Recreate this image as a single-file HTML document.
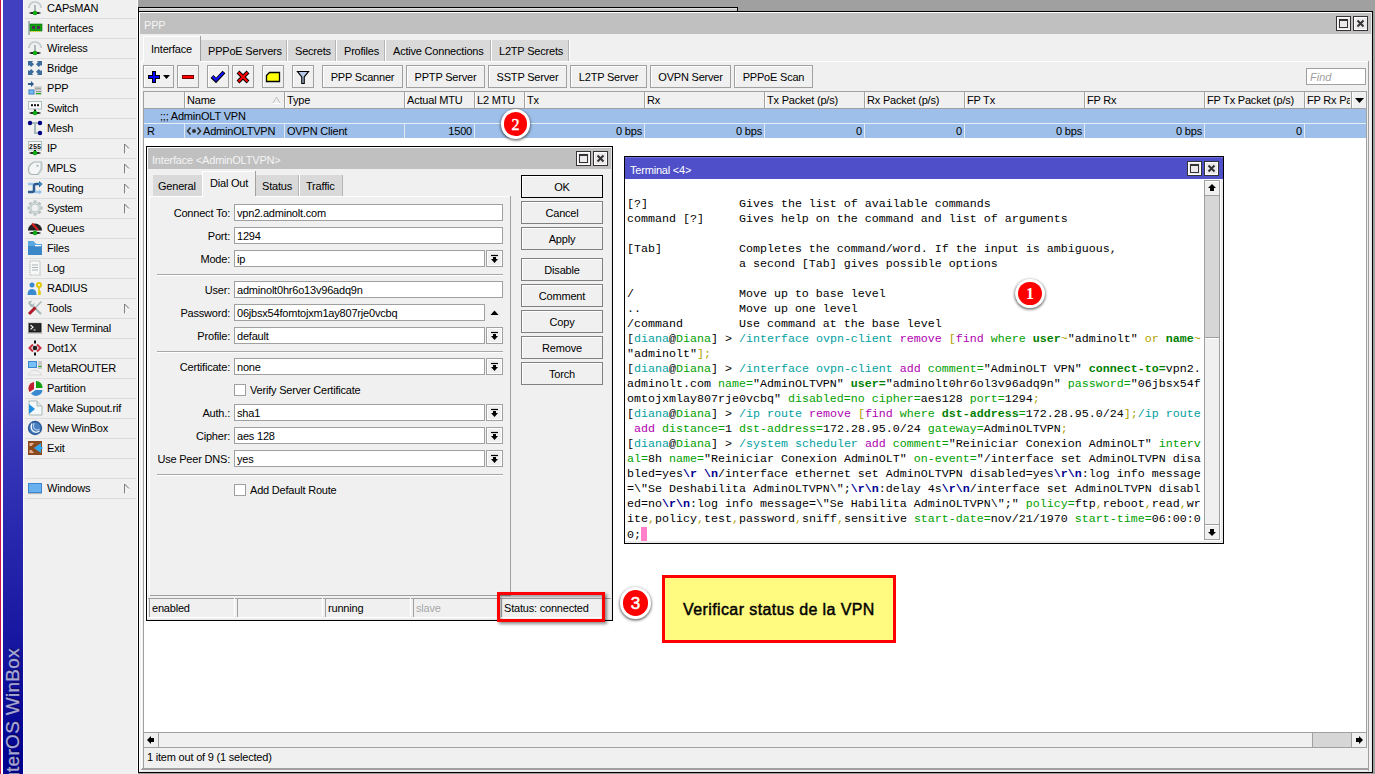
<!DOCTYPE html><html><head><meta charset="utf-8"><style>html,body{margin:0;padding:0;width:1375px;height:774px;overflow:hidden;background:#a0a0a0;position:relative;font-family:"Liberation Sans",sans-serif}</style></head><body><div style="position:absolute;left:0px;top:0px;width:1px;height:774px;background:#c8104c"></div><div style="position:absolute;left:1px;top:0px;width:2px;height:774px;background:#ffffff"></div><div style="position:absolute;left:3px;top:0px;width:20px;height:774px;background:linear-gradient(to bottom,#4040c0 0px,#4040c0 390px,#000090 774px)"></div><div style="position:absolute;left:-297px;top:648px;width:300px;height:20px;text-align:right;transform-origin:300px 0;transform:rotate(-90deg);font:19px/20px 'Liberation Sans', sans-serif;letter-spacing:0.3px;color:#a8a8d4;-webkit-text-stroke:0.3px #a8a8d4;white-space:pre;text-shadow:1px 1px 1px rgba(0,0,40,0.6)">RouterOS WinBox</div><div style="position:absolute;left:23px;top:0px;width:115px;height:774px;background:#f0f0f0"></div><div style="position:absolute;left:23px;top:0px;width:1px;height:774px;background:#fafafa"></div><div style="position:absolute;left:137px;top:0px;width:1px;height:774px;background:#ffffff"></div><div style="position:absolute;left:25px;top:18px;width:111px;height:1px;background:#dcdcdc"></div><div style="position:absolute;left:47px;top:2px;font:11px/13px 'Liberation Sans', sans-serif;color:#000;white-space:pre;letter-spacing:-0.2px">CAPsMAN</div><div style="position:absolute;left:25px;top:38px;width:111px;height:1px;background:#dcdcdc"></div><div style="position:absolute;left:47px;top:22px;font:11px/13px 'Liberation Sans', sans-serif;color:#000;white-space:pre;letter-spacing:-0.2px">Interfaces</div><div style="position:absolute;left:25px;top:58px;width:111px;height:1px;background:#dcdcdc"></div><div style="position:absolute;left:47px;top:42px;font:11px/13px 'Liberation Sans', sans-serif;color:#000;white-space:pre;letter-spacing:-0.2px">Wireless</div><div style="position:absolute;left:25px;top:78px;width:111px;height:1px;background:#dcdcdc"></div><div style="position:absolute;left:47px;top:62px;font:11px/13px 'Liberation Sans', sans-serif;color:#000;white-space:pre;letter-spacing:-0.2px">Bridge</div><div style="position:absolute;left:25px;top:98px;width:111px;height:1px;background:#dcdcdc"></div><div style="position:absolute;left:47px;top:82px;font:11px/13px 'Liberation Sans', sans-serif;color:#000;white-space:pre;letter-spacing:-0.2px">PPP</div><div style="position:absolute;left:25px;top:118px;width:111px;height:1px;background:#dcdcdc"></div><div style="position:absolute;left:47px;top:102px;font:11px/13px 'Liberation Sans', sans-serif;color:#000;white-space:pre;letter-spacing:-0.2px">Switch</div><div style="position:absolute;left:25px;top:138px;width:111px;height:1px;background:#dcdcdc"></div><div style="position:absolute;left:47px;top:122px;font:11px/13px 'Liberation Sans', sans-serif;color:#000;white-space:pre;letter-spacing:-0.2px">Mesh</div><div style="position:absolute;left:25px;top:158px;width:111px;height:1px;background:#dcdcdc"></div><div style="position:absolute;left:47px;top:142px;font:11px/13px 'Liberation Sans', sans-serif;color:#000;white-space:pre;letter-spacing:-0.2px">IP</div><svg style="position:absolute;left:123px;top:143px" width="8" height="12"><path d="M1.5 1 L1.5 10.5" stroke="#808080" stroke-width="1"/><path d="M1.5 1 L6 5.5" stroke="#707070" stroke-width="1"/><path d="M2 10.5 L6 6" stroke="#ffffff" stroke-width="1"/></svg><div style="position:absolute;left:25px;top:178px;width:111px;height:1px;background:#dcdcdc"></div><div style="position:absolute;left:47px;top:162px;font:11px/13px 'Liberation Sans', sans-serif;color:#000;white-space:pre;letter-spacing:-0.2px">MPLS</div><svg style="position:absolute;left:123px;top:163px" width="8" height="12"><path d="M1.5 1 L1.5 10.5" stroke="#808080" stroke-width="1"/><path d="M1.5 1 L6 5.5" stroke="#707070" stroke-width="1"/><path d="M2 10.5 L6 6" stroke="#ffffff" stroke-width="1"/></svg><div style="position:absolute;left:25px;top:198px;width:111px;height:1px;background:#dcdcdc"></div><div style="position:absolute;left:47px;top:182px;font:11px/13px 'Liberation Sans', sans-serif;color:#000;white-space:pre;letter-spacing:-0.2px">Routing</div><svg style="position:absolute;left:123px;top:183px" width="8" height="12"><path d="M1.5 1 L1.5 10.5" stroke="#808080" stroke-width="1"/><path d="M1.5 1 L6 5.5" stroke="#707070" stroke-width="1"/><path d="M2 10.5 L6 6" stroke="#ffffff" stroke-width="1"/></svg><div style="position:absolute;left:25px;top:218px;width:111px;height:1px;background:#dcdcdc"></div><div style="position:absolute;left:47px;top:202px;font:11px/13px 'Liberation Sans', sans-serif;color:#000;white-space:pre;letter-spacing:-0.2px">System</div><svg style="position:absolute;left:123px;top:203px" width="8" height="12"><path d="M1.5 1 L1.5 10.5" stroke="#808080" stroke-width="1"/><path d="M1.5 1 L6 5.5" stroke="#707070" stroke-width="1"/><path d="M2 10.5 L6 6" stroke="#ffffff" stroke-width="1"/></svg><div style="position:absolute;left:25px;top:238px;width:111px;height:1px;background:#dcdcdc"></div><div style="position:absolute;left:47px;top:222px;font:11px/13px 'Liberation Sans', sans-serif;color:#000;white-space:pre;letter-spacing:-0.2px">Queues</div><div style="position:absolute;left:25px;top:258px;width:111px;height:1px;background:#dcdcdc"></div><div style="position:absolute;left:47px;top:242px;font:11px/13px 'Liberation Sans', sans-serif;color:#000;white-space:pre;letter-spacing:-0.2px">Files</div><div style="position:absolute;left:25px;top:278px;width:111px;height:1px;background:#dcdcdc"></div><div style="position:absolute;left:47px;top:262px;font:11px/13px 'Liberation Sans', sans-serif;color:#000;white-space:pre;letter-spacing:-0.2px">Log</div><div style="position:absolute;left:25px;top:298px;width:111px;height:1px;background:#dcdcdc"></div><div style="position:absolute;left:47px;top:282px;font:11px/13px 'Liberation Sans', sans-serif;color:#000;white-space:pre;letter-spacing:-0.2px">RADIUS</div><div style="position:absolute;left:25px;top:318px;width:111px;height:1px;background:#dcdcdc"></div><div style="position:absolute;left:47px;top:302px;font:11px/13px 'Liberation Sans', sans-serif;color:#000;white-space:pre;letter-spacing:-0.2px">Tools</div><svg style="position:absolute;left:123px;top:303px" width="8" height="12"><path d="M1.5 1 L1.5 10.5" stroke="#808080" stroke-width="1"/><path d="M1.5 1 L6 5.5" stroke="#707070" stroke-width="1"/><path d="M2 10.5 L6 6" stroke="#ffffff" stroke-width="1"/></svg><div style="position:absolute;left:25px;top:338px;width:111px;height:1px;background:#dcdcdc"></div><div style="position:absolute;left:47px;top:322px;font:11px/13px 'Liberation Sans', sans-serif;color:#000;white-space:pre;letter-spacing:-0.2px">New Terminal</div><div style="position:absolute;left:25px;top:358px;width:111px;height:1px;background:#dcdcdc"></div><div style="position:absolute;left:47px;top:342px;font:11px/13px 'Liberation Sans', sans-serif;color:#000;white-space:pre;letter-spacing:-0.2px">Dot1X</div><div style="position:absolute;left:25px;top:378px;width:111px;height:1px;background:#dcdcdc"></div><div style="position:absolute;left:47px;top:362px;font:11px/13px 'Liberation Sans', sans-serif;color:#000;white-space:pre;letter-spacing:-0.2px">MetaROUTER</div><div style="position:absolute;left:25px;top:398px;width:111px;height:1px;background:#dcdcdc"></div><div style="position:absolute;left:47px;top:382px;font:11px/13px 'Liberation Sans', sans-serif;color:#000;white-space:pre;letter-spacing:-0.2px">Partition</div><div style="position:absolute;left:25px;top:418px;width:111px;height:1px;background:#dcdcdc"></div><div style="position:absolute;left:47px;top:402px;font:11px/13px 'Liberation Sans', sans-serif;color:#000;white-space:pre;letter-spacing:-0.2px">Make Supout.rif</div><div style="position:absolute;left:25px;top:438px;width:111px;height:1px;background:#dcdcdc"></div><div style="position:absolute;left:47px;top:422px;font:11px/13px 'Liberation Sans', sans-serif;color:#000;white-space:pre;letter-spacing:-0.2px">New WinBox</div><div style="position:absolute;left:25px;top:458px;width:111px;height:1px;background:#dcdcdc"></div><div style="position:absolute;left:47px;top:442px;font:11px/13px 'Liberation Sans', sans-serif;color:#000;white-space:pre;letter-spacing:-0.2px">Exit</div><div style="position:absolute;left:25px;top:478px;width:111px;height:1px;background:#dcdcdc"></div><div style="position:absolute;left:25px;top:498px;width:111px;height:1px;background:#dcdcdc"></div><div style="position:absolute;left:47px;top:482px;font:11px/13px 'Liberation Sans', sans-serif;color:#000;white-space:pre;letter-spacing:-0.2px">Windows</div><svg style="position:absolute;left:123px;top:483px" width="8" height="12"><path d="M1.5 1 L1.5 10.5" stroke="#808080" stroke-width="1"/><path d="M1.5 1 L6 5.5" stroke="#707070" stroke-width="1"/><path d="M2 10.5 L6 6" stroke="#ffffff" stroke-width="1"/></svg><svg width="0" height="0" style="position:absolute"><defs><radialGradient id="bg" cx="0.5" cy="0.5" r="0.5"><stop offset="0" stop-color="#000"/><stop offset="0.6" stop-color="#222"/><stop offset="1" stop-color="#000" stop-opacity="0"/></radialGradient><linearGradient id="ag" x1="0" y1="0" x2="0" y2="1"><stop offset="0" stop-color="#b8c4c4"/><stop offset="1" stop-color="#e8ecec"/></linearGradient></defs></svg><svg style="position:absolute;left:27px;top:0px" width="16" height="16" viewBox="0 0 16 16"><path d="M1.8 8 A6.2 6.2 0 0 1 14.2 8" fill="none" stroke="#c4cccc" stroke-width="1.8"/><rect x="7" y="5" width="2" height="7" fill="#aab8b8"/><ellipse cx="8" cy="13" rx="7" ry="1.4" fill="url(#bg)"/><circle cx="8" cy="13" r="2.3" fill="#10a810"/></svg><svg style="position:absolute;left:27px;top:20px" width="16" height="16" viewBox="0 0 16 16"><rect x="1" y="1" width="2" height="14" fill="#a8b8b8"/><rect x="3" y="4" width="12" height="7" fill="#10a010" stroke="#087008" stroke-width="0.6"/><rect x="5" y="6" width="3" height="3" fill="#4a3050"/><rect x="10" y="6" width="3" height="3" fill="#4a3050"/><path d="M4 11.5 H14" stroke="#e8e000" stroke-width="1" stroke-dasharray="1 1"/></svg><svg style="position:absolute;left:27px;top:40px" width="16" height="16" viewBox="0 0 16 16"><path d="M1.8 8 A6.2 6.2 0 0 1 14.2 8" fill="none" stroke="#c4cccc" stroke-width="1.8"/><rect x="7" y="5" width="2" height="7" fill="#aab8b8"/><ellipse cx="8" cy="13" rx="7" ry="1.4" fill="url(#bg)"/><circle cx="8" cy="13" r="2.3" fill="#10a810"/></svg><svg style="position:absolute;left:27px;top:60px" width="16" height="16" viewBox="0 0 16 16"><path d="M1 1 H6 L5 2.2 L7 4.2 L4.2 7 L2.2 5 L1 6 Z" fill="#3d6c9c"/><path d="M15 1 V6 L13.8 5 L11.8 7 L9 4.2 L11 2.2 L10 1 Z" fill="#3d6c9c" transform="translate(0,0)"/><path d="M1 15 V10 L2.2 11 L4.2 9 L7 11.8 L5 13.8 L6 15 Z" fill="#3d6c9c"/><path d="M15 15 H10 L11 13.8 L9 11.8 L11.8 9 L13.8 11 L15 10 Z" fill="#3d6c9c"/></svg><svg style="position:absolute;left:27px;top:80px" width="16" height="16" viewBox="0 0 16 16"><path d="M1 3 H4 V1 L7 4 L4 7 V5 H1 Z" fill="#2d5d8d"/><rect x="7" y="6" width="8" height="9" fill="#d8d8d8"/><rect x="8" y="7.5" width="6" height="2" fill="#a8a8a8"/><rect x="9" y="11" width="5" height="1" fill="#909090"/><rect x="9" y="13" width="5" height="1.2" fill="#10b010"/><rect x="1" y="9" width="7" height="6" fill="#e8e0d8"/><rect x="1.5" y="9.5" width="6" height="5" fill="#3a88d0"/><rect x="2.5" y="10.5" width="4" height="3" fill="#78b8f0"/></svg><svg style="position:absolute;left:27px;top:100px" width="16" height="16" viewBox="0 0 16 16"><rect x="1.5" y="1.5" width="13" height="7.5" fill="#fafafa" stroke="#b0c0c0" stroke-width="1"/><rect x="4" y="4.2" width="2" height="2" fill="#111"/><rect x="7" y="4.2" width="2" height="2" fill="#111"/><rect x="10" y="4.2" width="2" height="2" fill="#111"/><rect x="7" y="9.5" width="2" height="2" fill="#111"/><ellipse cx="8" cy="13" rx="7" ry="1.4" fill="url(#bg)"/><circle cx="8" cy="13" r="2.3" fill="#10a810"/></svg><svg style="position:absolute;left:27px;top:120px" width="16" height="16" viewBox="0 0 16 16"><path d="M3 3 H13 M8 3 V13 H13" fill="none" stroke="#a8b8b8" stroke-width="2"/><circle cx="3" cy="3" r="2.2" fill="#000080"/><circle cx="13" cy="3" r="2.2" fill="#000080"/><circle cx="13" cy="13" r="2.2" fill="#000080"/></svg><svg style="position:absolute;left:27px;top:140px" width="16" height="16" viewBox="0 0 16 16"><rect x="1.5" y="1.5" width="13" height="8.5" fill="#fafafa" stroke="#b0c0c0" stroke-width="1"/><text x="8" y="8.6" font-family="Liberation Mono" font-weight="bold" font-size="7" text-anchor="middle" fill="#111">255</text><rect x="7" y="10" width="2" height="2" fill="#111"/><ellipse cx="8" cy="13" rx="7" ry="1.4" fill="url(#bg)"/><circle cx="8" cy="13" r="2.3" fill="#10a810"/></svg><svg style="position:absolute;left:27px;top:160px" width="16" height="16" viewBox="0 0 16 16"><path d="M4 4 L7 2 H14.5 V9 L11 14.5 H6 Q1.5 14.5 1.5 10 Q1.5 6 4 4 Z" fill="#f4f6f6" stroke="#a8b4b4" stroke-width="1.2"/><path d="M14.5 3 V9 L11 14.5" fill="none" stroke="#c0cccc" stroke-width="2"/><rect x="9.5" y="4.8" width="2" height="2" fill="#b0bcbc"/></svg><svg style="position:absolute;left:27px;top:180px" width="16" height="16" viewBox="0 0 16 16"><path d="M1 4 H5 Q7 4 7 6 V10 Q7 12 9 12 H12" fill="none" stroke="#9cc4e8" stroke-width="2.4"/><path d="M12 9.5 L15 12 L12 14.5 Z" fill="#9cc4e8"/><path d="M1 12 H5 Q7 12 7 10 V6 Q7 4 9 4 H12" fill="none" stroke="#2d5d90" stroke-width="2.4"/><path d="M12 1 L15.5 4 L12 7.5 Z" fill="#2d5d90"/><circle cx="13" cy="4" r="0.9" fill="#30b0ff"/></svg><svg style="position:absolute;left:27px;top:200px" width="16" height="16" viewBox="0 0 16 16"><g fill="#b4c0c0"><circle cx="8" cy="8" r="6"/><rect x="6.5" y="0.5" width="3" height="15"/><rect x="0.5" y="6.5" width="15" height="3"/><rect x="6.5" y="0.5" width="3" height="15" transform="rotate(45 8 8)"/><rect x="6.5" y="0.5" width="3" height="15" transform="rotate(-45 8 8)"/></g><circle cx="8" cy="8" r="3.5" fill="#f0f0f0"/><circle cx="8" cy="8" r="5" fill="none" stroke="#f0f0f0" stroke-width="0.7"/></svg><svg style="position:absolute;left:27px;top:220px" width="16" height="16" viewBox="0 0 16 16"><path d="M1 10.5 A7 7 0 0 1 15 10.5 Z" fill="#222"/><path d="M5 3.5 L11 10" stroke="#d02020" stroke-width="2.4"/><ellipse cx="8" cy="13" rx="7" ry="1.4" fill="url(#bg)"/><circle cx="8" cy="13" r="2.3" fill="#10a810"/></svg><svg style="position:absolute;left:27px;top:240px" width="16" height="16" viewBox="0 0 16 16"><path d="M1 1 H6 L9 4 H15 V15 H1 Z" fill="#3a88c8"/><path d="M1 1 H6 L9 4 H15 V6 H1 Z" fill="#5aa8e0"/><rect x="8" y="5" width="6" height="1.3" fill="#ffffff"/></svg><svg style="position:absolute;left:27px;top:260px" width="16" height="16" viewBox="0 0 16 16"><path d="M3 1 H13 V15 H3 Z" fill="#f8f8f8" stroke="#b8c4c4" stroke-width="1.2" stroke-dasharray="1.5 0.6"/><path d="M5 5 H11 M5 7.5 H11 M5 10 H11" stroke="#a8b4b4" stroke-width="1"/></svg><svg style="position:absolute;left:27px;top:280px" width="16" height="16" viewBox="0 0 16 16"><circle cx="5" cy="5" r="2.5" fill="#3a8ad0"/><path d="M0.5 15 Q0.5 9 5 9 Q9.5 9 9.5 15 Z" fill="#3a8ad0"/><circle cx="12" cy="5" r="3" fill="#e0c800"/><circle cx="12" cy="5" r="1" fill="#fffbe0"/><path d="M12 8 V15 M12 12 H14 M12 14 H14" stroke="#e0c800" stroke-width="1.6"/></svg><svg style="position:absolute;left:27px;top:300px" width="16" height="16" viewBox="0 0 16 16"><path d="M4 4.5 L14 14" stroke="#a8b8b8" stroke-width="2.2"/><path d="M1.2 3.5 A3 3 0 0 1 5 0.8 L3.5 3.5 L5.5 5 L7.2 2.8 A3.2 3.2 0 0 1 4 7 Z" fill="#a8b8b8"/><path d="M14.5 1.5 L8 8" stroke="#a8b8b8" stroke-width="1.6"/><path d="M8.5 7.5 L2 14" stroke="#b01828" stroke-width="3"/></svg><svg style="position:absolute;left:27px;top:320px" width="16" height="16" viewBox="0 0 16 16"><rect x="1.5" y="3" width="13" height="9.5" fill="#1a1a1a" stroke="#888" stroke-width="0.5"/><rect x="3" y="4.5" width="10" height="6.5" fill="#2a2a2a"/><path d="M3.5 5 L6 7.2 L3.5 9.4" fill="none" stroke="#fff" stroke-width="1.1"/><path d="M6.5 10 H8.5" stroke="#fff" stroke-width="0.9"/><rect x="0.5" y="13" width="15" height="1" fill="#c8c8c8"/></svg><svg style="position:absolute;left:27px;top:340px" width="16" height="16" viewBox="0 0 16 16"><path d="M6 4.5 L2.5 8 L6 11.5 M10 4.5 L13.5 8 L10 11.5" fill="none" stroke="#c83040" stroke-width="2"/><rect x="7" y="0.5" width="2" height="3" fill="#111"/><rect x="7" y="12.5" width="2" height="3" fill="#111"/><circle cx="8" cy="8" r="2.3" fill="#222"/></svg><svg style="position:absolute;left:27px;top:360px" width="16" height="16" viewBox="0 0 16 16"><rect x="1" y="1" width="9" height="7" fill="#3a88d0"/><rect x="2" y="2" width="7" height="5" fill="#78c0f8"/><rect x="11" y="1" width="4" height="8" fill="#c8c8c8"/><rect x="11.5" y="6" width="3" height="1" fill="#10b010"/><path d="M1 15 Q4 10 8 10 Q12 10 15 15 Z" fill="none" stroke="#d8d8d8" stroke-width="1"/></svg><svg style="position:absolute;left:27px;top:380px" width="16" height="16" viewBox="0 0 16 16"><path d="M7 2 A6.5 6.5 0 0 0 2.5 12 L7 9 Z" fill="#c02030"/><path d="M9 1 V8 H15.5 A6.5 6.5 0 0 0 9 1 Z" fill="#10a010"/><path d="M15.5 10 A6.5 6.5 0 0 1 4 13.5 L8.5 10 Z" fill="#3a88d0"/></svg><svg style="position:absolute;left:27px;top:400px" width="16" height="16" viewBox="0 0 16 16"><path d="M2 1 H10 L15 6 V15 H2 Z" fill="#f4f8f8" stroke="#a8b8b8" stroke-width="1"/><path d="M10 1 V6 H15" fill="#e0e8e8" stroke="#a8b8b8" stroke-width="1"/><path d="M2 4 L8 9 L2 14 Z" fill="#2090e0"/></svg><svg style="position:absolute;left:27px;top:420px" width="16" height="16" viewBox="0 0 16 16"><circle cx="8" cy="8" r="7.2" fill="#2d5d9a"/><circle cx="8" cy="8" r="5.5" fill="#4a80c0"/><path d="M5 3.5 Q3 8 6 11 Q9 13.5 12.5 11" fill="none" stroke="#fff" stroke-width="1.2"/><path d="M7 3 Q5.5 7 7.5 9 Q10 11 12.5 9.5" fill="none" stroke="#e0f0ff" stroke-width="0.8"/></svg><svg style="position:absolute;left:27px;top:440px" width="16" height="16" viewBox="0 0 16 16"><rect x="1" y="1" width="14" height="14" fill="#8a4a20"/><path d="M2.5 3 H7 L4.5 6 H2.5 Z M2.5 10 H4.5 L7 13 H2.5 Z" fill="#e8b090"/><path d="M14 3 V13 L7 8 Z" fill="#30a8f0"/><rect x="12" y="7" width="3.5" height="2" fill="#30a8f0"/></svg><svg style="position:absolute;left:27px;top:480px" width="16" height="16" viewBox="0 0 16 16"><rect x="1" y="3" width="14" height="10" fill="#3a88d0"/><rect x="2" y="4" width="12" height="8" fill="#68b0f0"/><rect x="1" y="13" width="14" height="1.2" fill="#b8b8b8"/></svg><div style="position:absolute;left:138px;top:7px;width:600px;height:5px;background:#000"></div><div style="position:absolute;left:139px;top:8px;width:598px;height:1px;background:#e0e0e0"></div><div style="position:absolute;left:139px;top:9px;width:598px;height:2px;background:#c8c8c8"></div><div style="position:absolute;left:138px;top:11px;width:1235px;height:762px;background:#000"></div><div style="position:absolute;left:139px;top:12px;width:1233px;height:760px;background:#ffffff"></div><div style="position:absolute;left:140px;top:13px;width:1232px;height:759px;background:#f0f0f0"></div><div style="position:absolute;left:1371px;top:12px;width:1px;height:760px;background:#e8e8e8"></div><div style="position:absolute;left:139px;top:771px;width:1233px;height:1px;background:#e8e8e8"></div><div style="position:absolute;left:140px;top:13px;width:1231px;height:21px;background:#c0c0c0"></div><div style="position:absolute;left:144px;top:19px;font:11px/13px 'Liberation Sans', sans-serif;color:#f4f4f4;white-space:pre;letter-spacing:-0.2px">PPP</div><div style="position:absolute;left:1336px;top:16px;width:15px;height:15px;background:#333"></div><div style="position:absolute;left:1337px;top:17px;width:13px;height:13px;background:#ffffff"></div><div style="position:absolute;left:1338px;top:18px;width:12px;height:12px;background:#ece8ec"></div><div style="position:absolute;left:1338px;top:29px;width:12px;height:1px;background:#ffffff"></div><div style="position:absolute;left:1339px;top:19px;width:9px;height:9px;background:#333"></div><div style="position:absolute;left:1340px;top:21px;width:7px;height:6px;background:#ece8ec"></div><div style="position:absolute;left:1353px;top:16px;width:15px;height:15px;background:#333"></div><div style="position:absolute;left:1354px;top:17px;width:13px;height:13px;background:#ffffff"></div><div style="position:absolute;left:1355px;top:18px;width:12px;height:12px;background:#ece8ec"></div><div style="position:absolute;left:1355px;top:29px;width:12px;height:1px;background:#ffffff"></div><svg style="position:absolute;left:1353px;top:16px" width="15" height="15"><path d="M4.5 4.5 L10.5 10.5 M10.5 4.5 L4.5 10.5" stroke="#333" stroke-width="2"/></svg><div style="position:absolute;left:201px;top:40px;width:368px;height:21px;background:#d9d9d9"></div><div style="position:absolute;left:143px;top:36px;width:57px;height:1px;background:#ffffff"></div><div style="position:absolute;left:143px;top:36px;width:1px;height:26px;background:#ffffff"></div><div style="position:absolute;left:200px;top:36px;width:1px;height:25px;background:#a0a0a0"></div><div style="position:absolute;left:151px;top:43px;font:11px/13px 'Liberation Sans', sans-serif;color:#000;white-space:pre;letter-spacing:-0.2px">Interface</div><div style="position:absolute;left:208px;top:45px;font:11px/13px 'Liberation Sans', sans-serif;color:#000;white-space:pre;letter-spacing:-0.2px">PPPoE Servers</div><div style="position:absolute;left:286px;top:40px;width:1px;height:21px;background:#b4b4b4"></div><div style="position:absolute;left:287px;top:40px;width:1px;height:21px;background:#ffffff"></div><div style="position:absolute;left:295px;top:45px;font:11px/13px 'Liberation Sans', sans-serif;color:#000;white-space:pre;letter-spacing:-0.2px">Secrets</div><div style="position:absolute;left:335px;top:40px;width:1px;height:21px;background:#b4b4b4"></div><div style="position:absolute;left:336px;top:40px;width:1px;height:21px;background:#ffffff"></div><div style="position:absolute;left:344px;top:45px;font:11px/13px 'Liberation Sans', sans-serif;color:#000;white-space:pre;letter-spacing:-0.2px">Profiles</div><div style="position:absolute;left:384px;top:40px;width:1px;height:21px;background:#b4b4b4"></div><div style="position:absolute;left:385px;top:40px;width:1px;height:21px;background:#ffffff"></div><div style="position:absolute;left:393px;top:45px;font:11px/13px 'Liberation Sans', sans-serif;color:#000;white-space:pre;letter-spacing:-0.2px">Active Connections</div><div style="position:absolute;left:490px;top:40px;width:1px;height:21px;background:#b4b4b4"></div><div style="position:absolute;left:491px;top:40px;width:1px;height:21px;background:#ffffff"></div><div style="position:absolute;left:499px;top:45px;font:11px/13px 'Liberation Sans', sans-serif;color:#000;white-space:pre;letter-spacing:-0.2px">L2TP Secrets</div><div style="position:absolute;left:568px;top:40px;width:1px;height:21px;background:#b4b4b4"></div><div style="position:absolute;left:569px;top:40px;width:1px;height:21px;background:#ffffff"></div><div style="position:absolute;left:200px;top:61px;width:1169px;height:1px;background:#ffffff"></div><div style="position:absolute;left:141px;top:61px;width:3px;height:1px;background:#ffffff"></div><div style="position:absolute;left:141px;top:61px;width:1px;height:710px;background:#ffffff"></div><div style="position:absolute;left:1368px;top:61px;width:1px;height:710px;background:#a0a0a0"></div><div style="position:absolute;left:141px;top:769px;width:1228px;height:1px;background:#a0a0a0"></div><div style="position:absolute;left:143px;top:65px;width:31px;height:23px;background:#a0a0a0"></div><div style="position:absolute;left:144px;top:66px;width:29px;height:21px;background:#ffffff"></div><div style="position:absolute;left:145px;top:67px;width:28px;height:20px;background:#f0f0f0"></div><div style="position:absolute;left:177px;top:65px;width:22px;height:23px;background:#a0a0a0"></div><div style="position:absolute;left:178px;top:66px;width:20px;height:21px;background:#ffffff"></div><div style="position:absolute;left:179px;top:67px;width:19px;height:20px;background:#f0f0f0"></div><div style="position:absolute;left:207px;top:65px;width:22px;height:23px;background:#a0a0a0"></div><div style="position:absolute;left:208px;top:66px;width:20px;height:21px;background:#ffffff"></div><div style="position:absolute;left:209px;top:67px;width:19px;height:20px;background:#f0f0f0"></div><div style="position:absolute;left:232px;top:65px;width:22px;height:23px;background:#a0a0a0"></div><div style="position:absolute;left:233px;top:66px;width:20px;height:21px;background:#ffffff"></div><div style="position:absolute;left:234px;top:67px;width:19px;height:20px;background:#f0f0f0"></div><div style="position:absolute;left:262px;top:65px;width:22px;height:23px;background:#a0a0a0"></div><div style="position:absolute;left:263px;top:66px;width:20px;height:21px;background:#ffffff"></div><div style="position:absolute;left:264px;top:67px;width:19px;height:20px;background:#f0f0f0"></div><div style="position:absolute;left:292px;top:65px;width:22px;height:23px;background:#a0a0a0"></div><div style="position:absolute;left:293px;top:66px;width:20px;height:21px;background:#ffffff"></div><div style="position:absolute;left:294px;top:67px;width:19px;height:20px;background:#f0f0f0"></div><div style="position:absolute;left:322px;top:65px;width:81px;height:23px;background:#a0a0a0"></div><div style="position:absolute;left:323px;top:66px;width:79px;height:21px;background:#ffffff"></div><div style="position:absolute;left:324px;top:67px;width:78px;height:20px;background:#f0f0f0"></div><div style="position:absolute;left:312.5px;width:100px;top:71px;font:11px/13px 'Liberation Sans', sans-serif;color:#000;white-space:pre;text-align:center;letter-spacing:-0.2px">PPP Scanner</div><div style="position:absolute;left:406px;top:65px;width:79px;height:23px;background:#a0a0a0"></div><div style="position:absolute;left:407px;top:66px;width:77px;height:21px;background:#ffffff"></div><div style="position:absolute;left:408px;top:67px;width:76px;height:20px;background:#f0f0f0"></div><div style="position:absolute;left:396.5px;width:98px;top:71px;font:11px/13px 'Liberation Sans', sans-serif;color:#000;white-space:pre;text-align:center;letter-spacing:-0.2px">PPTP Server</div><div style="position:absolute;left:488px;top:65px;width:79px;height:23px;background:#a0a0a0"></div><div style="position:absolute;left:489px;top:66px;width:77px;height:21px;background:#ffffff"></div><div style="position:absolute;left:490px;top:67px;width:76px;height:20px;background:#f0f0f0"></div><div style="position:absolute;left:478.5px;width:98px;top:71px;font:11px/13px 'Liberation Sans', sans-serif;color:#000;white-space:pre;text-align:center;letter-spacing:-0.2px">SSTP Server</div><div style="position:absolute;left:570px;top:65px;width:77px;height:23px;background:#a0a0a0"></div><div style="position:absolute;left:571px;top:66px;width:75px;height:21px;background:#ffffff"></div><div style="position:absolute;left:572px;top:67px;width:74px;height:20px;background:#f0f0f0"></div><div style="position:absolute;left:560.5px;width:96px;top:71px;font:11px/13px 'Liberation Sans', sans-serif;color:#000;white-space:pre;text-align:center;letter-spacing:-0.2px">L2TP Server</div><div style="position:absolute;left:650px;top:65px;width:81px;height:23px;background:#a0a0a0"></div><div style="position:absolute;left:651px;top:66px;width:79px;height:21px;background:#ffffff"></div><div style="position:absolute;left:652px;top:67px;width:78px;height:20px;background:#f0f0f0"></div><div style="position:absolute;left:640.5px;width:100px;top:71px;font:11px/13px 'Liberation Sans', sans-serif;color:#000;white-space:pre;text-align:center;letter-spacing:-0.2px">OVPN Server</div><div style="position:absolute;left:734px;top:65px;width:79px;height:23px;background:#a0a0a0"></div><div style="position:absolute;left:735px;top:66px;width:77px;height:21px;background:#ffffff"></div><div style="position:absolute;left:736px;top:67px;width:76px;height:20px;background:#f0f0f0"></div><div style="position:absolute;left:724.5px;width:98px;top:71px;font:11px/13px 'Liberation Sans', sans-serif;color:#000;white-space:pre;text-align:center;letter-spacing:-0.2px">PPPoE Scan</div><svg style="position:absolute;left:143px;top:65px" width="31" height="23"><path d="M9 6H13V10H17V14H13V18H9V14H5V10H9Z" fill="#000"/><path d="M10 7H12V11H16V13H12V17H10V13H6V11H10Z" fill="#0000ff"/><path d="M20 10H27L23.5 14Z" fill="#000"/></svg><svg style="position:absolute;left:177px;top:65px" width="22" height="23"><rect x="5" y="10" width="12" height="4" fill="#7a0000"/><rect x="6" y="11" width="10" height="2" fill="#ff0000"/></svg><svg style="position:absolute;left:207px;top:65px" width="22" height="23"><path d="M5 11.5 L9 15.5 L17 7" fill="none" stroke="#000" stroke-width="4"/><path d="M5.5 11.5 L9 15 L16.5 7.5" fill="none" stroke="#1010ff" stroke-width="2"/></svg><svg style="position:absolute;left:232px;top:65px" width="22" height="23"><path d="M6 7 L16 17 M16 7 L6 17" stroke="#000" stroke-width="4"/><path d="M6.5 7.5 L15.5 16.5 M15.5 7.5 L6.5 16.5" stroke="#ff0000" stroke-width="2.2"/></svg><svg style="position:absolute;left:262px;top:65px" width="22" height="23"><path d="M4.5 10.5 L7.5 7.5 H17.5 V16.5 H4.5 Z" fill="#ffff00" stroke="#000" stroke-width="1.3"/></svg><svg style="position:absolute;left:292px;top:65px" width="22" height="23"><path d="M5.5 6.5 H16.5 L12.2 12 V18.5 H9.8 V12 Z" fill="#b8c8e8" stroke="#000" stroke-width="1.2"/></svg><div style="position:absolute;left:1306px;top:68px;width:60px;height:17px;background:#a0a0a0"></div><div style="position:absolute;left:1307px;top:69px;width:58px;height:15px;background:#ffffff"></div><div style="position:absolute;left:1310px;top:71px;font:11px/13px 'Liberation Sans', sans-serif;color:#a0a0a0;white-space:pre;font-style:italic">Find</div><div style="position:absolute;left:143px;top:91px;width:1224px;height:1px;background:#a0a0a0"></div><div style="position:absolute;left:143px;top:91px;width:1px;height:678px;background:#a0a0a0"></div><div style="position:absolute;left:1366px;top:91px;width:1px;height:657px;background:#a0a0a0"></div><div style="position:absolute;left:144px;top:92px;width:1222px;height:16px;background:#f0f0f0"></div><div style="position:absolute;left:143px;top:108px;width:1224px;height:1px;background:#a0a0a0"></div><div style="position:absolute;left:184px;top:92px;width:1px;height:16px;background:#a0a0a0"></div><div style="position:absolute;left:185px;top:92px;width:1px;height:16px;background:#ffffff"></div><div style="position:absolute;left:187px;top:94px;width:96px;overflow:hidden;font:11px/13px 'Liberation Sans', sans-serif;white-space:pre;letter-spacing:-0.2px">Name</div><div style="position:absolute;left:284px;top:92px;width:1px;height:16px;background:#a0a0a0"></div><div style="position:absolute;left:285px;top:92px;width:1px;height:16px;background:#ffffff"></div><div style="position:absolute;left:287px;top:94px;width:116px;overflow:hidden;font:11px/13px 'Liberation Sans', sans-serif;white-space:pre;letter-spacing:-0.2px">Type</div><div style="position:absolute;left:404px;top:92px;width:1px;height:16px;background:#a0a0a0"></div><div style="position:absolute;left:405px;top:92px;width:1px;height:16px;background:#ffffff"></div><div style="position:absolute;left:407px;top:94px;width:66px;overflow:hidden;font:11px/13px 'Liberation Sans', sans-serif;white-space:pre;letter-spacing:-0.2px">Actual MTU</div><div style="position:absolute;left:474px;top:92px;width:1px;height:16px;background:#a0a0a0"></div><div style="position:absolute;left:475px;top:92px;width:1px;height:16px;background:#ffffff"></div><div style="position:absolute;left:477px;top:94px;width:46px;overflow:hidden;font:11px/13px 'Liberation Sans', sans-serif;white-space:pre;letter-spacing:-0.2px">L2 MTU</div><div style="position:absolute;left:524px;top:92px;width:1px;height:16px;background:#a0a0a0"></div><div style="position:absolute;left:525px;top:92px;width:1px;height:16px;background:#ffffff"></div><div style="position:absolute;left:527px;top:94px;width:116px;overflow:hidden;font:11px/13px 'Liberation Sans', sans-serif;white-space:pre;letter-spacing:-0.2px">Tx</div><div style="position:absolute;left:644px;top:92px;width:1px;height:16px;background:#a0a0a0"></div><div style="position:absolute;left:645px;top:92px;width:1px;height:16px;background:#ffffff"></div><div style="position:absolute;left:647px;top:94px;width:116px;overflow:hidden;font:11px/13px 'Liberation Sans', sans-serif;white-space:pre;letter-spacing:-0.2px">Rx</div><div style="position:absolute;left:764px;top:92px;width:1px;height:16px;background:#a0a0a0"></div><div style="position:absolute;left:765px;top:92px;width:1px;height:16px;background:#ffffff"></div><div style="position:absolute;left:767px;top:94px;width:96px;overflow:hidden;font:11px/13px 'Liberation Sans', sans-serif;white-space:pre;letter-spacing:-0.2px">Tx Packet (p/s)</div><div style="position:absolute;left:864px;top:92px;width:1px;height:16px;background:#a0a0a0"></div><div style="position:absolute;left:865px;top:92px;width:1px;height:16px;background:#ffffff"></div><div style="position:absolute;left:867px;top:94px;width:96px;overflow:hidden;font:11px/13px 'Liberation Sans', sans-serif;white-space:pre;letter-spacing:-0.2px">Rx Packet (p/s)</div><div style="position:absolute;left:964px;top:92px;width:1px;height:16px;background:#a0a0a0"></div><div style="position:absolute;left:965px;top:92px;width:1px;height:16px;background:#ffffff"></div><div style="position:absolute;left:967px;top:94px;width:116px;overflow:hidden;font:11px/13px 'Liberation Sans', sans-serif;white-space:pre;letter-spacing:-0.2px">FP Tx</div><div style="position:absolute;left:1084px;top:92px;width:1px;height:16px;background:#a0a0a0"></div><div style="position:absolute;left:1085px;top:92px;width:1px;height:16px;background:#ffffff"></div><div style="position:absolute;left:1087px;top:94px;width:116px;overflow:hidden;font:11px/13px 'Liberation Sans', sans-serif;white-space:pre;letter-spacing:-0.2px">FP Rx</div><div style="position:absolute;left:1204px;top:92px;width:1px;height:16px;background:#a0a0a0"></div><div style="position:absolute;left:1205px;top:92px;width:1px;height:16px;background:#ffffff"></div><div style="position:absolute;left:1207px;top:94px;width:96px;overflow:hidden;font:11px/13px 'Liberation Sans', sans-serif;white-space:pre;letter-spacing:-0.2px">FP Tx Packet (p/s)</div><div style="position:absolute;left:1304px;top:92px;width:1px;height:16px;background:#a0a0a0"></div><div style="position:absolute;left:1305px;top:92px;width:1px;height:16px;background:#ffffff"></div><div style="position:absolute;left:1307px;top:94px;width:43px;overflow:hidden;font:11px/13px 'Liberation Sans', sans-serif;white-space:pre;letter-spacing:-0.2px">FP Rx Pa</div><div style="position:absolute;left:1351px;top:92px;width:1px;height:16px;background:#a0a0a0"></div><div style="position:absolute;left:1352px;top:92px;width:1px;height:16px;background:#ffffff"></div><svg style="position:absolute;left:272px;top:95px" width="10" height="10"><path d="M1 8 L4.5 2 L8 8" fill="none" stroke="#c0c0c0" stroke-width="1"/><path d="M1 8.5 H8" stroke="#ffffff"/></svg><svg style="position:absolute;left:1353px;top:96px" width="13" height="10"><path d="M2 2 H11 L6.5 7 Z" fill="#000"/></svg><div style="position:absolute;left:144px;top:109px;width:1222px;height:623px;background:#ffffff"></div><div style="position:absolute;left:144px;top:109px;width:1222px;height:14px;background:#9dbfe9"></div><div style="position:absolute;left:144px;top:123px;width:1222px;height:1px;background:#e6eef8"></div><div style="position:absolute;left:144px;top:124px;width:1222px;height:14px;background:#9dbfe9"></div><div style="position:absolute;left:160px;top:110px;font:11px/13px 'Liberation Sans', sans-serif;color:#000;white-space:pre;letter-spacing:-0.2px">;;; AdminOLT VPN</div><div style="position:absolute;left:184px;top:124px;width:1px;height:14px;background:#e0e8f2"></div><div style="position:absolute;left:284px;top:124px;width:1px;height:14px;background:#e0e8f2"></div><div style="position:absolute;left:404px;top:124px;width:1px;height:14px;background:#e0e8f2"></div><div style="position:absolute;left:474px;top:124px;width:1px;height:14px;background:#e0e8f2"></div><div style="position:absolute;left:524px;top:124px;width:1px;height:14px;background:#e0e8f2"></div><div style="position:absolute;left:644px;top:124px;width:1px;height:14px;background:#e0e8f2"></div><div style="position:absolute;left:764px;top:124px;width:1px;height:14px;background:#e0e8f2"></div><div style="position:absolute;left:864px;top:124px;width:1px;height:14px;background:#e0e8f2"></div><div style="position:absolute;left:964px;top:124px;width:1px;height:14px;background:#e0e8f2"></div><div style="position:absolute;left:1084px;top:124px;width:1px;height:14px;background:#e0e8f2"></div><div style="position:absolute;left:1204px;top:124px;width:1px;height:14px;background:#e0e8f2"></div><div style="position:absolute;left:1304px;top:124px;width:1px;height:14px;background:#e0e8f2"></div><div style="position:absolute;left:147px;top:125px;font:11px/13px 'Liberation Sans', sans-serif;color:#000;white-space:pre;letter-spacing:-0.2px">R</div><svg style="position:absolute;left:186px;top:126px" width="16" height="10"><path d="M4.5 1.5 L1.5 5 L4.5 8.5 M11.5 1.5 L14.5 5 L11.5 8.5" fill="none" stroke="#303030" stroke-width="1.6"/><circle cx="8" cy="5" r="2" fill="#303030"/></svg><div style="position:absolute;left:203px;top:125px;font:11px/13px 'Liberation Sans', sans-serif;color:#000;white-space:pre;letter-spacing:-0.2px">AdminOLTVPN</div><div style="position:absolute;left:287px;top:125px;font:11px/13px 'Liberation Sans', sans-serif;color:#000;white-space:pre;letter-spacing:-0.2px">OVPN Client</div><div style="position:absolute;right:903px;top:125px;font:11px/13px 'Liberation Sans', sans-serif;color:#000;white-space:pre;text-align:right;letter-spacing:-0.2px">1500</div><div style="position:absolute;right:733px;top:125px;font:11px/13px 'Liberation Sans', sans-serif;color:#000;white-space:pre;text-align:right;letter-spacing:-0.2px">0 bps</div><div style="position:absolute;right:613px;top:125px;font:11px/13px 'Liberation Sans', sans-serif;color:#000;white-space:pre;text-align:right;letter-spacing:-0.2px">0 bps</div><div style="position:absolute;right:513px;top:125px;font:11px/13px 'Liberation Sans', sans-serif;color:#000;white-space:pre;text-align:right;letter-spacing:-0.2px">0</div><div style="position:absolute;right:413px;top:125px;font:11px/13px 'Liberation Sans', sans-serif;color:#000;white-space:pre;text-align:right;letter-spacing:-0.2px">0</div><div style="position:absolute;right:293px;top:125px;font:11px/13px 'Liberation Sans', sans-serif;color:#000;white-space:pre;text-align:right;letter-spacing:-0.2px">0 bps</div><div style="position:absolute;right:173px;top:125px;font:11px/13px 'Liberation Sans', sans-serif;color:#000;white-space:pre;text-align:right;letter-spacing:-0.2px">0 bps</div><div style="position:absolute;right:73px;top:125px;font:11px/13px 'Liberation Sans', sans-serif;color:#000;white-space:pre;text-align:right;letter-spacing:-0.2px">0</div><div style="position:absolute;left:143px;top:732px;width:1224px;height:1px;background:#a0a0a0"></div><div style="position:absolute;left:143px;top:747px;width:1224px;height:1px;background:#a0a0a0"></div><div style="position:absolute;left:144px;top:733px;width:1222px;height:14px;background:#f0f0f0"></div><div style="position:absolute;left:158px;top:733px;width:1px;height:14px;background:#a0a0a0"></div><div style="position:absolute;left:1312px;top:733px;width:39px;height:14px;background:#d6d6d6"></div><div style="position:absolute;left:1312px;top:733px;width:1px;height:14px;background:#a0a0a0"></div><div style="position:absolute;left:1351px;top:733px;width:1px;height:14px;background:#a0a0a0"></div><svg style="position:absolute;left:144px;top:733px" width="14" height="14"><path d="M3 7 L7 3 V5 H10 V9 H7 V11 Z" fill="#000"/></svg><svg style="position:absolute;left:1352px;top:733px" width="14" height="14"><path d="M11 7 L7 3 V5 H4 V9 H7 V11 Z" fill="#000"/></svg><div style="position:absolute;left:147px;top:751px;font:11px/13px 'Liberation Sans', sans-serif;color:#000;white-space:pre;letter-spacing:-0.2px">1 item out of 9 (1 selected)</div><div style="position:absolute;left:142px;top:768px;width:1227px;height:1px;background:#a0a0a0"></div><div style="position:absolute;left:146px;top:146px;width:467px;height:475px;background:#000"></div><div style="position:absolute;left:147px;top:147px;width:465px;height:473px;background:#ffffff"></div><div style="position:absolute;left:148px;top:148px;width:464px;height:472px;background:#f0f0f0"></div><div style="position:absolute;left:611px;top:147px;width:1px;height:473px;background:#e4e4e4"></div><div style="position:absolute;left:147px;top:619px;width:465px;height:1px;background:#e4e4e4"></div><div style="position:absolute;left:148px;top:148px;width:463px;height:21px;background:#c0c0c0"></div><div style="position:absolute;left:152px;top:154px;font:11px/13px 'Liberation Sans', sans-serif;color:#f4f4f4;white-space:pre;letter-spacing:-0.2px">Interface &lt;AdminOLTVPN&gt;</div><div style="position:absolute;left:576px;top:151px;width:15px;height:15px;background:#333"></div><div style="position:absolute;left:577px;top:152px;width:13px;height:13px;background:#ffffff"></div><div style="position:absolute;left:578px;top:153px;width:11px;height:11px;background:#ece8ec"></div><div style="position:absolute;left:579px;top:154px;width:9px;height:9px;background:#333"></div><div style="position:absolute;left:580px;top:156px;width:7px;height:6px;background:#ece8ec"></div><div style="position:absolute;left:593px;top:151px;width:15px;height:15px;background:#333"></div><div style="position:absolute;left:594px;top:152px;width:13px;height:13px;background:#ffffff"></div><div style="position:absolute;left:595px;top:153px;width:11px;height:11px;background:#ece8ec"></div><svg style="position:absolute;left:593px;top:151px" width="15" height="15"><path d="M4.5 4.5 L10.5 10.5 M10.5 4.5 L4.5 10.5" stroke="#333" stroke-width="2"/></svg><div style="position:absolute;left:153px;top:175px;width:49px;height:21px;background:#d9d9d9"></div><div style="position:absolute;left:158px;top:180px;font:11px/13px 'Liberation Sans', sans-serif;color:#000;white-space:pre;letter-spacing:-0.2px">General</div><div style="position:absolute;left:202px;top:171px;width:53px;height:1px;background:#ffffff"></div><div style="position:absolute;left:202px;top:171px;width:1px;height:26px;background:#ffffff"></div><div style="position:absolute;left:255px;top:171px;width:1px;height:25px;background:#a0a0a0"></div><div style="position:absolute;left:210px;top:177px;font:11px/13px 'Liberation Sans', sans-serif;color:#000;white-space:pre;letter-spacing:-0.2px">Dial Out</div><div style="position:absolute;left:256px;top:175px;width:87px;height:21px;background:#d9d9d9"></div><div style="position:absolute;left:298px;top:175px;width:1px;height:21px;background:#b4b4b4"></div><div style="position:absolute;left:299px;top:175px;width:1px;height:21px;background:#ffffff"></div><div style="position:absolute;left:342px;top:175px;width:1px;height:21px;background:#b4b4b4"></div><div style="position:absolute;left:262px;top:180px;font:11px/13px 'Liberation Sans', sans-serif;color:#000;white-space:pre;letter-spacing:-0.2px">Status</div><div style="position:absolute;left:306px;top:180px;font:11px/13px 'Liberation Sans', sans-serif;color:#000;white-space:pre;letter-spacing:-0.2px">Traffic</div><div style="position:absolute;left:149px;top:196px;width:53px;height:1px;background:#ffffff"></div><div style="position:absolute;left:256px;top:196px;width:255px;height:1px;background:#ffffff"></div><div style="position:absolute;left:149px;top:196px;width:1px;height:400px;background:#ffffff"></div><div style="position:absolute;left:510px;top:196px;width:1px;height:400px;background:#a0a0a0"></div><div style="position:absolute;left:150px;top:595px;width:361px;height:1px;background:#a0a0a0"></div><div style="position:absolute;right:1145px;top:207px;font:11px/13px 'Liberation Sans', sans-serif;color:#000;white-space:pre;text-align:right;letter-spacing:-0.2px">Connect To:</div><div style="position:absolute;left:234px;top:204px;width:269px;height:17px;background:#a0a0a0"></div><div style="position:absolute;left:235px;top:205px;width:267px;height:15px;background:#ffffff"></div><div style="position:absolute;left:237px;top:207px;font:11px/13px 'Liberation Sans', sans-serif;color:#000;white-space:pre;letter-spacing:-0.2px">vpn2.adminolt.com</div><div style="position:absolute;right:1145px;top:230px;font:11px/13px 'Liberation Sans', sans-serif;color:#000;white-space:pre;text-align:right;letter-spacing:-0.2px">Port:</div><div style="position:absolute;left:234px;top:227px;width:269px;height:17px;background:#a0a0a0"></div><div style="position:absolute;left:235px;top:228px;width:267px;height:15px;background:#ffffff"></div><div style="position:absolute;left:237px;top:230px;font:11px/13px 'Liberation Sans', sans-serif;color:#000;white-space:pre;letter-spacing:-0.2px">1294</div><div style="position:absolute;right:1145px;top:253px;font:11px/13px 'Liberation Sans', sans-serif;color:#000;white-space:pre;text-align:right;letter-spacing:-0.2px">Mode:</div><div style="position:absolute;left:234px;top:250px;width:251px;height:17px;background:#a0a0a0"></div><div style="position:absolute;left:235px;top:251px;width:249px;height:15px;background:#ffffff"></div><div style="position:absolute;left:237px;top:253px;font:11px/13px 'Liberation Sans', sans-serif;color:#000;white-space:pre;letter-spacing:-0.2px">ip</div><div style="position:absolute;left:486px;top:250px;width:17px;height:17px;background:#a0a0a0"></div><div style="position:absolute;left:487px;top:251px;width:15px;height:15px;background:#ffffff"></div><div style="position:absolute;left:488px;top:252px;width:13px;height:13px;background:#f0f0f0"></div><svg style="position:absolute;left:486px;top:250px" width="17" height="17"><path d="M5 5.5 H12" stroke="#000" stroke-width="1.2"/><path d="M7 7 H10 V9 H12 L8.5 13 L5 9 H7 Z" fill="#000"/></svg><div style="position:absolute;left:157px;top:274px;width:346px;height:1px;background:#a8a8a8"></div><div style="position:absolute;left:157px;top:275px;width:346px;height:1px;background:#ffffff"></div><div style="position:absolute;right:1145px;top:284px;font:11px/13px 'Liberation Sans', sans-serif;color:#000;white-space:pre;text-align:right;letter-spacing:-0.2px">User:</div><div style="position:absolute;left:234px;top:281px;width:269px;height:17px;background:#a0a0a0"></div><div style="position:absolute;left:235px;top:282px;width:267px;height:15px;background:#ffffff"></div><div style="position:absolute;left:237px;top:284px;font:11px/13px 'Liberation Sans', sans-serif;color:#000;white-space:pre;letter-spacing:-0.2px">adminolt0hr6o13v96adq9n</div><div style="position:absolute;right:1145px;top:307px;font:11px/13px 'Liberation Sans', sans-serif;color:#000;white-space:pre;text-align:right;letter-spacing:-0.2px">Password:</div><div style="position:absolute;left:234px;top:304px;width:251px;height:17px;background:#a0a0a0"></div><div style="position:absolute;left:235px;top:305px;width:249px;height:15px;background:#ffffff"></div><div style="position:absolute;left:237px;top:307px;font:11px/13px 'Liberation Sans', sans-serif;color:#000;white-space:pre;letter-spacing:-0.2px">06jbsx54fomtojxm1ay807rje0vcbq</div><svg style="position:absolute;left:486px;top:304px" width="17" height="17"><path d="M4.5 11 L8.5 6.5 L12.5 11 Z" fill="#000"/></svg><div style="position:absolute;right:1145px;top:330px;font:11px/13px 'Liberation Sans', sans-serif;color:#000;white-space:pre;text-align:right;letter-spacing:-0.2px">Profile:</div><div style="position:absolute;left:234px;top:327px;width:251px;height:17px;background:#a0a0a0"></div><div style="position:absolute;left:235px;top:328px;width:249px;height:15px;background:#ffffff"></div><div style="position:absolute;left:237px;top:330px;font:11px/13px 'Liberation Sans', sans-serif;color:#000;white-space:pre;letter-spacing:-0.2px">default</div><div style="position:absolute;left:486px;top:327px;width:17px;height:17px;background:#a0a0a0"></div><div style="position:absolute;left:487px;top:328px;width:15px;height:15px;background:#ffffff"></div><div style="position:absolute;left:488px;top:329px;width:13px;height:13px;background:#f0f0f0"></div><svg style="position:absolute;left:486px;top:327px" width="17" height="17"><path d="M5 5.5 H12" stroke="#000" stroke-width="1.2"/><path d="M7 7 H10 V9 H12 L8.5 13 L5 9 H7 Z" fill="#000"/></svg><div style="position:absolute;left:157px;top:351px;width:346px;height:1px;background:#a8a8a8"></div><div style="position:absolute;left:157px;top:352px;width:346px;height:1px;background:#ffffff"></div><div style="position:absolute;right:1145px;top:361px;font:11px/13px 'Liberation Sans', sans-serif;color:#000;white-space:pre;text-align:right;letter-spacing:-0.2px">Certificate:</div><div style="position:absolute;left:234px;top:358px;width:251px;height:17px;background:#a0a0a0"></div><div style="position:absolute;left:235px;top:359px;width:249px;height:15px;background:#ffffff"></div><div style="position:absolute;left:237px;top:361px;font:11px/13px 'Liberation Sans', sans-serif;color:#000;white-space:pre;letter-spacing:-0.2px">none</div><div style="position:absolute;left:486px;top:358px;width:17px;height:17px;background:#a0a0a0"></div><div style="position:absolute;left:487px;top:359px;width:15px;height:15px;background:#ffffff"></div><div style="position:absolute;left:488px;top:360px;width:13px;height:13px;background:#f0f0f0"></div><svg style="position:absolute;left:486px;top:358px" width="17" height="17"><path d="M5 5.5 H12" stroke="#000" stroke-width="1.2"/><path d="M7 7 H10 V9 H12 L8.5 13 L5 9 H7 Z" fill="#000"/></svg><div style="position:absolute;left:234px;top:384px;width:12px;height:12px;background:#a0a0a0"></div><div style="position:absolute;left:235px;top:385px;width:10px;height:10px;background:#ffffff"></div><div style="position:absolute;left:250px;top:384px;font:11px/13px 'Liberation Sans', sans-serif;color:#000;white-space:pre;letter-spacing:-0.2px">Verify Server Certificate</div><div style="position:absolute;right:1145px;top:407px;font:11px/13px 'Liberation Sans', sans-serif;color:#000;white-space:pre;text-align:right;letter-spacing:-0.2px">Auth.:</div><div style="position:absolute;left:234px;top:404px;width:251px;height:17px;background:#a0a0a0"></div><div style="position:absolute;left:235px;top:405px;width:249px;height:15px;background:#ffffff"></div><div style="position:absolute;left:237px;top:407px;font:11px/13px 'Liberation Sans', sans-serif;color:#000;white-space:pre;letter-spacing:-0.2px">sha1</div><div style="position:absolute;left:486px;top:404px;width:17px;height:17px;background:#a0a0a0"></div><div style="position:absolute;left:487px;top:405px;width:15px;height:15px;background:#ffffff"></div><div style="position:absolute;left:488px;top:406px;width:13px;height:13px;background:#f0f0f0"></div><svg style="position:absolute;left:486px;top:404px" width="17" height="17"><path d="M5 5.5 H12" stroke="#000" stroke-width="1.2"/><path d="M7 7 H10 V9 H12 L8.5 13 L5 9 H7 Z" fill="#000"/></svg><div style="position:absolute;right:1145px;top:430px;font:11px/13px 'Liberation Sans', sans-serif;color:#000;white-space:pre;text-align:right;letter-spacing:-0.2px">Cipher:</div><div style="position:absolute;left:234px;top:427px;width:251px;height:17px;background:#a0a0a0"></div><div style="position:absolute;left:235px;top:428px;width:249px;height:15px;background:#ffffff"></div><div style="position:absolute;left:237px;top:430px;font:11px/13px 'Liberation Sans', sans-serif;color:#000;white-space:pre;letter-spacing:-0.2px">aes 128</div><div style="position:absolute;left:486px;top:427px;width:17px;height:17px;background:#a0a0a0"></div><div style="position:absolute;left:487px;top:428px;width:15px;height:15px;background:#ffffff"></div><div style="position:absolute;left:488px;top:429px;width:13px;height:13px;background:#f0f0f0"></div><svg style="position:absolute;left:486px;top:427px" width="17" height="17"><path d="M5 5.5 H12" stroke="#000" stroke-width="1.2"/><path d="M7 7 H10 V9 H12 L8.5 13 L5 9 H7 Z" fill="#000"/></svg><div style="position:absolute;right:1145px;top:453px;font:11px/13px 'Liberation Sans', sans-serif;color:#000;white-space:pre;text-align:right;letter-spacing:-0.2px">Use Peer DNS:</div><div style="position:absolute;left:234px;top:450px;width:251px;height:17px;background:#a0a0a0"></div><div style="position:absolute;left:235px;top:451px;width:249px;height:15px;background:#ffffff"></div><div style="position:absolute;left:237px;top:453px;font:11px/13px 'Liberation Sans', sans-serif;color:#000;white-space:pre;letter-spacing:-0.2px">yes</div><div style="position:absolute;left:486px;top:450px;width:17px;height:17px;background:#a0a0a0"></div><div style="position:absolute;left:487px;top:451px;width:15px;height:15px;background:#ffffff"></div><div style="position:absolute;left:488px;top:452px;width:13px;height:13px;background:#f0f0f0"></div><svg style="position:absolute;left:486px;top:450px" width="17" height="17"><path d="M5 5.5 H12" stroke="#000" stroke-width="1.2"/><path d="M7 7 H10 V9 H12 L8.5 13 L5 9 H7 Z" fill="#000"/></svg><div style="position:absolute;left:157px;top:474px;width:346px;height:1px;background:#a8a8a8"></div><div style="position:absolute;left:157px;top:475px;width:346px;height:1px;background:#ffffff"></div><div style="position:absolute;left:234px;top:484px;width:12px;height:12px;background:#a0a0a0"></div><div style="position:absolute;left:235px;top:485px;width:10px;height:10px;background:#ffffff"></div><div style="position:absolute;left:250px;top:484px;font:11px/13px 'Liberation Sans', sans-serif;color:#000;white-space:pre;letter-spacing:-0.2px">Add Default Route</div><div style="position:absolute;left:521px;top:175px;width:82px;height:23px;background:#000"></div><div style="position:absolute;left:522px;top:176px;width:80px;height:21px;background:#ffffff"></div><div style="position:absolute;left:523px;top:177px;width:79px;height:20px;background:#f0f0f0"></div><div style="position:absolute;left:512.0px;width:100px;top:181px;font:11px/13px 'Liberation Sans', sans-serif;color:#000;white-space:pre;text-align:center;letter-spacing:-0.2px">OK</div><div style="position:absolute;left:521px;top:201px;width:82px;height:23px;background:#808080"></div><div style="position:absolute;left:522px;top:202px;width:80px;height:21px;background:#ffffff"></div><div style="position:absolute;left:523px;top:203px;width:79px;height:20px;background:#f0f0f0"></div><div style="position:absolute;left:511.5px;width:101px;top:207px;font:11px/13px 'Liberation Sans', sans-serif;color:#000;white-space:pre;text-align:center;letter-spacing:-0.2px">Cancel</div><div style="position:absolute;left:521px;top:227px;width:82px;height:23px;background:#808080"></div><div style="position:absolute;left:522px;top:228px;width:80px;height:21px;background:#ffffff"></div><div style="position:absolute;left:523px;top:229px;width:79px;height:20px;background:#f0f0f0"></div><div style="position:absolute;left:511.5px;width:101px;top:233px;font:11px/13px 'Liberation Sans', sans-serif;color:#000;white-space:pre;text-align:center;letter-spacing:-0.2px">Apply</div><div style="position:absolute;left:521px;top:258px;width:82px;height:23px;background:#808080"></div><div style="position:absolute;left:522px;top:259px;width:80px;height:21px;background:#ffffff"></div><div style="position:absolute;left:523px;top:260px;width:79px;height:20px;background:#f0f0f0"></div><div style="position:absolute;left:511.5px;width:101px;top:264px;font:11px/13px 'Liberation Sans', sans-serif;color:#000;white-space:pre;text-align:center;letter-spacing:-0.2px">Disable</div><div style="position:absolute;left:521px;top:284px;width:82px;height:23px;background:#808080"></div><div style="position:absolute;left:522px;top:285px;width:80px;height:21px;background:#ffffff"></div><div style="position:absolute;left:523px;top:286px;width:79px;height:20px;background:#f0f0f0"></div><div style="position:absolute;left:511.5px;width:101px;top:290px;font:11px/13px 'Liberation Sans', sans-serif;color:#000;white-space:pre;text-align:center;letter-spacing:-0.2px">Comment</div><div style="position:absolute;left:521px;top:310px;width:82px;height:23px;background:#808080"></div><div style="position:absolute;left:522px;top:311px;width:80px;height:21px;background:#ffffff"></div><div style="position:absolute;left:523px;top:312px;width:79px;height:20px;background:#f0f0f0"></div><div style="position:absolute;left:511.5px;width:101px;top:316px;font:11px/13px 'Liberation Sans', sans-serif;color:#000;white-space:pre;text-align:center;letter-spacing:-0.2px">Copy</div><div style="position:absolute;left:521px;top:336px;width:82px;height:23px;background:#808080"></div><div style="position:absolute;left:522px;top:337px;width:80px;height:21px;background:#ffffff"></div><div style="position:absolute;left:523px;top:338px;width:79px;height:20px;background:#f0f0f0"></div><div style="position:absolute;left:511.5px;width:101px;top:342px;font:11px/13px 'Liberation Sans', sans-serif;color:#000;white-space:pre;text-align:center;letter-spacing:-0.2px">Remove</div><div style="position:absolute;left:521px;top:362px;width:82px;height:23px;background:#808080"></div><div style="position:absolute;left:522px;top:363px;width:80px;height:21px;background:#ffffff"></div><div style="position:absolute;left:523px;top:364px;width:79px;height:20px;background:#f0f0f0"></div><div style="position:absolute;left:511.5px;width:101px;top:368px;font:11px/13px 'Liberation Sans', sans-serif;color:#000;white-space:pre;text-align:center;letter-spacing:-0.2px">Torch</div><div style="position:absolute;left:148px;top:598px;width:463px;height:1px;background:#a0a0a0"></div><div style="position:absolute;left:149px;top:598px;width:86px;height:1px;background:#a0a0a0"></div><div style="position:absolute;left:149px;top:598px;width:1px;height:20px;background:#a0a0a0"></div><div style="position:absolute;left:149px;top:617px;width:86px;height:1px;background:#ffffff"></div><div style="position:absolute;left:234px;top:598px;width:1px;height:20px;background:#ffffff"></div><div style="position:absolute;left:152px;top:602px;font:11px/13px 'Liberation Sans', sans-serif;color:#000;white-space:pre;letter-spacing:-0.2px">enabled</div><div style="position:absolute;left:237px;top:598px;width:86px;height:1px;background:#a0a0a0"></div><div style="position:absolute;left:237px;top:598px;width:1px;height:20px;background:#a0a0a0"></div><div style="position:absolute;left:237px;top:617px;width:86px;height:1px;background:#ffffff"></div><div style="position:absolute;left:322px;top:598px;width:1px;height:20px;background:#ffffff"></div><div style="position:absolute;left:325px;top:598px;width:86px;height:1px;background:#a0a0a0"></div><div style="position:absolute;left:325px;top:598px;width:1px;height:20px;background:#a0a0a0"></div><div style="position:absolute;left:325px;top:617px;width:86px;height:1px;background:#ffffff"></div><div style="position:absolute;left:410px;top:598px;width:1px;height:20px;background:#ffffff"></div><div style="position:absolute;left:328px;top:602px;font:11px/13px 'Liberation Sans', sans-serif;color:#000;white-space:pre;letter-spacing:-0.2px">running</div><div style="position:absolute;left:413px;top:598px;width:86px;height:1px;background:#a0a0a0"></div><div style="position:absolute;left:413px;top:598px;width:1px;height:20px;background:#a0a0a0"></div><div style="position:absolute;left:413px;top:617px;width:86px;height:1px;background:#ffffff"></div><div style="position:absolute;left:498px;top:598px;width:1px;height:20px;background:#ffffff"></div><div style="position:absolute;left:416px;top:602px;font:11px/13px 'Liberation Sans', sans-serif;color:#a8a8a8;white-space:pre;letter-spacing:-0.2px">slave</div><div style="position:absolute;left:501px;top:598px;width:104px;height:1px;background:#a0a0a0"></div><div style="position:absolute;left:501px;top:598px;width:1px;height:20px;background:#a0a0a0"></div><div style="position:absolute;left:501px;top:617px;width:104px;height:1px;background:#ffffff"></div><div style="position:absolute;left:604px;top:598px;width:1px;height:20px;background:#ffffff"></div><div style="position:absolute;left:504px;top:602px;font:11px/13px 'Liberation Sans', sans-serif;color:#000;white-space:pre;letter-spacing:-0.2px">Status: connected</div><div style="position:absolute;left:624px;top:156px;width:600px;height:388px;background:#000"></div><div style="position:absolute;left:625px;top:157px;width:598px;height:386px;background:#f0f0f0"></div><div style="position:absolute;left:625px;top:157px;width:598px;height:22px;background:#4f4fc9"></div><div style="position:absolute;left:625px;top:157px;width:598px;height:1px;background:#7070d8"></div><div style="position:absolute;left:630px;top:164px;font:11px/13px 'Liberation Sans', sans-serif;color:#ffffff;white-space:pre;letter-spacing:-0.2px">Terminal &lt;4&gt;</div><div style="position:absolute;left:1187px;top:161px;width:15px;height:15px;background:#333"></div><div style="position:absolute;left:1188px;top:162px;width:13px;height:13px;background:#ffffff"></div><div style="position:absolute;left:1189px;top:163px;width:11px;height:11px;background:#ece8ec"></div><div style="position:absolute;left:1190px;top:164px;width:9px;height:9px;background:#333"></div><div style="position:absolute;left:1191px;top:166px;width:7px;height:6px;background:#ece8ec"></div><div style="position:absolute;left:1204px;top:161px;width:15px;height:15px;background:#333"></div><div style="position:absolute;left:1205px;top:162px;width:13px;height:13px;background:#ffffff"></div><div style="position:absolute;left:1206px;top:163px;width:11px;height:11px;background:#ece8ec"></div><svg style="position:absolute;left:1204px;top:161px" width="15" height="15"><path d="M4.5 4.5 L10.5 10.5 M10.5 4.5 L4.5 10.5" stroke="#333" stroke-width="2"/></svg><div style="position:absolute;left:625px;top:179px;width:597px;height:363px;background:#ffffff"></div><div style="position:absolute;left:1204px;top:180px;width:16px;height:360px;background:#a0a0a0"></div><div style="position:absolute;left:1205px;top:181px;width:14px;height:358px;background:#f0f0f0"></div><div style="position:absolute;left:1205px;top:196px;width:14px;height:141px;background:#d6d6d6"></div><div style="position:absolute;left:1204px;top:195px;width:16px;height:1px;background:#a0a0a0"></div><div style="position:absolute;left:1204px;top:337px;width:16px;height:1px;background:#a0a0a0"></div><div style="position:absolute;left:1204px;top:524px;width:16px;height:1px;background:#a0a0a0"></div><div style="position:absolute;left:1205px;top:338px;width:14px;height:1px;background:#ffffff"></div><div style="position:absolute;left:1205px;top:181px;width:14px;height:1px;background:#ffffff"></div><div style="position:absolute;left:1205px;top:525px;width:14px;height:1px;background:#ffffff"></div><div style="position:absolute;left:1221px;top:179px;width:2px;height:364px;background:#ececec"></div><div style="position:absolute;left:625px;top:541px;width:598px;height:2px;background:#ececec"></div><svg style="position:absolute;left:1204px;top:180px" width="16" height="16"><path d="M4 8 H6 V11 H10 V8 H12 L8 4 Z" fill="#000"/></svg><svg style="position:absolute;left:1204px;top:524px" width="16" height="16"><path d="M4 8 H6 V5 H10 V8 H12 L8 12 Z" fill="#000"/></svg><div style="position:absolute;left:627px;top:182px;font:11.667px/15px 'Liberation Mono', monospace;white-space:pre;color:#000"><br><span style="color:#000">[?]             Gives the list of available commands</span><br><span style="color:#000">command [?]     Gives help on the command and list of arguments</span><br><br><span style="color:#000">[Tab]           Completes the command/word. If the input is ambiguous,</span><br><span style="color:#000">                a second [Tab] gives possible options</span><br><br><span style="color:#000">/               Move up to base level</span><br><span style="color:#000">..              Move up one level</span><br><span style="color:#000">/command        Use command at the base level</span><br><span style="color:#000">[</span><span style="color:#00a0a0">diana</span><span style="color:#000">@</span><span style="color:#00a000">Diana</span><span style="color:#000">] &gt; </span><span style="color:#00a0a0">/interface ovpn-client </span><span style="color:#b000b0">remove </span><span style="color:#b0a000">[</span><span style="color:#b000b0">find </span><span style="color:#00a000">where </span><span style="color:#008000;font-weight:bold">user</span><span style="color:#b0a000">~</span><span style="color:#000">&quot;adminolt&quot; </span><span style="color:#b0a000">or </span><span style="color:#008000;font-weight:bold">name</span><span style="color:#b0a000">~</span><br><span style="color:#000">&quot;adminolt&quot;</span><span style="color:#b0a000">];</span><br><span style="color:#000">[</span><span style="color:#00a0a0">diana</span><span style="color:#000">@</span><span style="color:#00a000">Diana</span><span style="color:#000">] &gt; </span><span style="color:#00a0a0">/interface ovpn-client </span><span style="color:#b000b0">add </span><span style="color:#00a000">comment=</span><span style="color:#000">&quot;AdminOLT VPN&quot; </span><span style="color:#008000;font-weight:bold">connect-to=</span><span style="color:#000">vpn2.</span><br><span style="color:#000">adminolt.com </span><span style="color:#00a000">name=</span><span style="color:#000">&quot;AdminOLTVPN&quot; </span><span style="color:#008000;font-weight:bold">user=</span><span style="color:#000">&quot;adminolt0hr6ol3v96adq9n&quot; </span><span style="color:#00a000">password=</span><span style="color:#000">&quot;06jbsx54f</span><br><span style="color:#000">omtojxmlay807rje0vcbq&quot; </span><span style="color:#00a000">disabled=no cipher=</span><span style="color:#000">aes128 </span><span style="color:#00a000">port=</span><span style="color:#000">1294</span><span style="color:#b0a000">;</span><br><span style="color:#000">[</span><span style="color:#00a0a0">diana</span><span style="color:#000">@</span><span style="color:#00a000">Diana</span><span style="color:#000">] &gt; </span><span style="color:#00a0a0">/ip route </span><span style="color:#b000b0">remove </span><span style="color:#b0a000">[</span><span style="color:#b000b0">find </span><span style="color:#00a000">where </span><span style="color:#008000;font-weight:bold">dst-address</span><span style="color:#00a000">=</span><span style="color:#000">172.28.95.0/24</span><span style="color:#b0a000">];</span><span style="color:#00a0a0">/ip route</span><br><span style="color:#b000b0"> add </span><span style="color:#00a000">distance=</span><span style="color:#000">1 </span><span style="color:#00a000">dst-address=</span><span style="color:#000">172.28.95.0/24 </span><span style="color:#00a000">gateway=</span><span style="color:#000">AdminOLTVPN</span><span style="color:#b0a000">;</span><br><span style="color:#000">[</span><span style="color:#00a0a0">diana</span><span style="color:#000">@</span><span style="color:#00a000">Diana</span><span style="color:#000">] &gt; </span><span style="color:#00a0a0">/system scheduler </span><span style="color:#b000b0">add </span><span style="color:#00a000">comment=</span><span style="color:#000">&quot;Reiniciar Conexion AdminOLT&quot; </span><span style="color:#00a000">interv</span><br><span style="color:#00a000">al=</span><span style="color:#000">8h </span><span style="color:#00a000">name=</span><span style="color:#000">&quot;Reiniciar Conexion AdminOLT&quot; </span><span style="color:#00a000">on-event=</span><span style="color:#000">&quot;/interface set AdminOLTVPN disa</span><br><span style="color:#000">bled=yes</span><span style="color:#000090;font-weight:bold">\r</span><span style="color:#000"> </span><span style="color:#000090;font-weight:bold">\n</span><span style="color:#000">/interface ethernet set AdminOLTVPN disabled=yes</span><span style="color:#000090;font-weight:bold">\r\n</span><span style="color:#000">:log info message</span><br><span style="color:#000">=\&quot;Se Deshabilita AdminOLTVPN\&quot;;</span><span style="color:#000090;font-weight:bold">\r\n</span><span style="color:#000">:delay 4s</span><span style="color:#000090;font-weight:bold">\r\n</span><span style="color:#000">/interface set AdminOLTVPN disabl</span><br><span style="color:#000">ed=no</span><span style="color:#000090;font-weight:bold">\r\n</span><span style="color:#000">:log info message=\&quot;Se Habilita AdminOLTVPN\&quot;;&quot; </span><span style="color:#00a000">policy=</span><span style="color:#000">ftp</span><span style="color:#b0a000">,</span><span style="color:#000">reboot</span><span style="color:#b0a000">,</span><span style="color:#000">read</span><span style="color:#b0a000">,</span><span style="color:#000">wr</span><br><span style="color:#000">ite</span><span style="color:#b0a000">,</span><span style="color:#000">policy</span><span style="color:#b0a000">,</span><span style="color:#000">test</span><span style="color:#b0a000">,</span><span style="color:#000">password</span><span style="color:#b0a000">,</span><span style="color:#000">sniff</span><span style="color:#b0a000">,</span><span style="color:#000">sensitive </span><span style="color:#00a000">start-date=</span><span style="color:#000">nov/21/1970 </span><span style="color:#00a000">start-time=</span><span style="color:#000">06:00:0</span><br><span style="color:#000">0;</span><span style="display:inline-block;width:6px;height:14px;background:#ff80c8;vertical-align:-3px"></span></div><div style="position:absolute;left:1015.4px;top:279.09999999999997px;width:29.2px;height:29.2px;border-radius:50%;background:#ffffff;box-shadow:0 1px 2.5px 0.6px rgba(0,0,0,0.55)"></div><div style="position:absolute;left:1018.2px;top:281.9px;width:23.6px;height:23.6px;border-radius:50%;background:#ff0000"></div><div style="position:absolute;left:1010px;top:284.2px;width:40px;height:20px;color:#fff;font:bold 16px/20px 'Liberation Serif', serif;text-align:center;">1</div><div style="position:absolute;left:500.6px;top:109.3px;width:29.8px;height:29.8px;border-radius:50%;background:#ffffff;box-shadow:0 1px 2.5px 0.6px rgba(0,0,0,0.55)"></div><div style="position:absolute;left:503.7px;top:112.4px;width:23.6px;height:23.6px;border-radius:50%;background:#ff0000"></div><div style="position:absolute;left:495.5px;top:114.7px;width:40px;height:20px;color:#fff;font:normal 16px/20px 'Liberation Serif', serif;text-align:center;-webkit-text-stroke:0.4px #fff">2</div><div style="position:absolute;left:619.6px;top:587.3000000000001px;width:31.8px;height:31.8px;border-radius:50%;background:#ffffff;box-shadow:0 1px 2.5px 0.6px rgba(0,0,0,0.55)"></div><div style="position:absolute;left:622.6px;top:590.3000000000001px;width:25.8px;height:25.8px;border-radius:50%;background:#ff0000"></div><div style="position:absolute;left:615.5px;top:593.7px;width:40px;height:20px;color:#fff;font:normal 17px/20px 'Liberation Sans', sans-serif;text-align:center;-webkit-text-stroke:0.5px #fff">3</div><div style="position:absolute;left:497px;top:592px;width:108px;height:30px;box-sizing:border-box;border:3px solid #ff0000;box-shadow:2px 2px 3px rgba(0,0,0,0.45), inset 1px 2px 3px rgba(0,0,0,0.35)"></div><div style="position:absolute;left:662px;top:575px;width:234px;height:68px;box-sizing:border-box;border:3px solid #ff0000;background:#fffa80"></div><div style="position:absolute;left:683px;top:600px;font:16px/20px 'Liberation Sans', sans-serif;color:#000;white-space:pre;-webkit-text-stroke:0.45px #000;letter-spacing:0.4px">Verificar status de la VPN</div></body></html>
